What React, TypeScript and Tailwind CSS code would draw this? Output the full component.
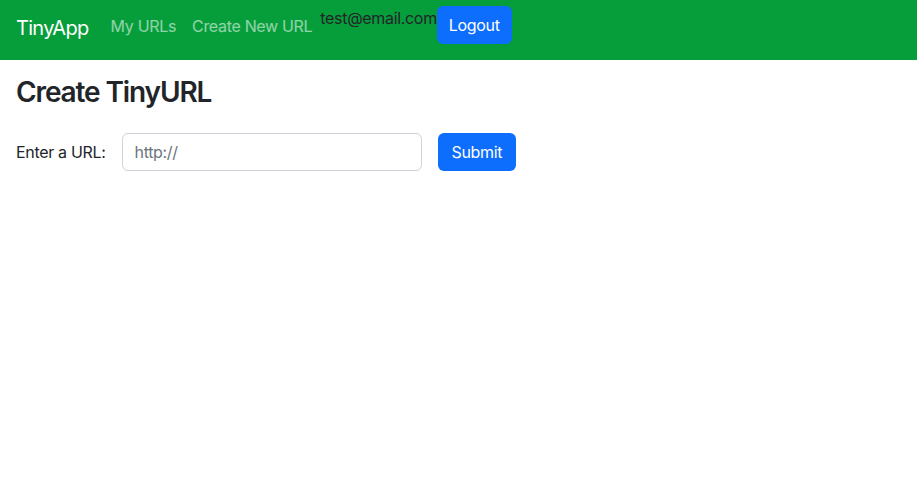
export default function App() {
  return (
    <div className="min-h-screen bg-white text-[#212529] font-['Inter',sans-serif] tracking-[-0.02em]">
      <nav className="flex h-[60px] items-start bg-[#069e3b] px-4 pt-[6px]">
        <a href="#" className="mr-[14px] mt-[7px] text-[20px] leading-[30px] tracking-[-0.035em] text-white">
          TinyApp
        </a>
        <div className="mt-[8px] flex">
          <a href="#" className="px-2 text-base leading-6 text-white/55">
            My URLs
          </a>
          <a href="#" className="px-2 text-base leading-6 text-white/55">
            Create New URL
          </a>
        </div>
        <span className="text-base leading-6 text-[#212529]">test@email.com</span>
        <button className="h-[38px] rounded-[6px] bg-[#0d6efd] px-3 text-base text-white">
          Logout
        </button>
      </nav>

      <main className="px-4 pt-4">
        <h3 className="mb-[23px] text-[28px] font-semibold leading-[1.2] tracking-[-0.04em]">Create TinyURL</h3>
        <form className="flex items-center gap-4" onSubmit={(e) => e.preventDefault()}>
          <label htmlFor="longURL" className="text-base">
            Enter a URL:
          </label>
          <input
            id="longURL"
            type="text"
            placeholder="http://"
            className="h-[38px] w-[300px] rounded-[6px] border border-[#ced4da] px-3 text-base tracking-[-0.02em] outline-none placeholder:text-[#6c757d]"
          />
          <button type="submit" className="h-[38px] rounded-[6px] bg-[#0d6efd] px-[14px] text-base text-white">
            Submit
          </button>
        </form>
      </main>
    </div>
  )
}
